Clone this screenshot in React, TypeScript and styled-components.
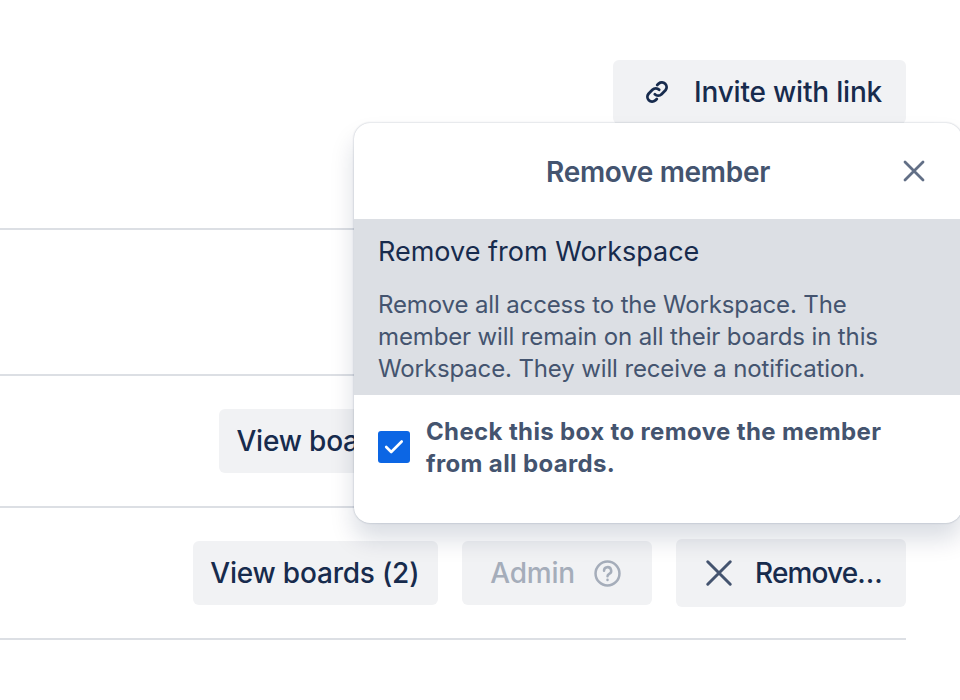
import React from "react";
import styled, { createGlobalStyle } from "styled-components";

const Global = createGlobalStyle`
  html, body { margin: 0; padding: 0; background: #fff; overflow: hidden; }
  body { font-family: Inter, "Liberation Sans", sans-serif; color: #172B4D; }
`;

const Page = styled.div`
  position: relative;
  width: 960px;
  height: 700px;
  overflow: hidden;
`;

const List = styled.div`
  width: 906px;
  display: flex;
  flex-direction: column;
`;

const Row = styled.div<{ $h: number; $top: number; $end?: number }>`
  height: ${p => p.$h}px;
  box-sizing: border-box;
  padding-top: ${p => p.$top}px;
  padding-right: ${p => p.$end ?? 0}px;
  border-bottom: 2px solid #DCDFE4;
  display: flex;
  justify-content: flex-end;
  align-items: flex-start;
  gap: 24px;
`;

const Button = styled.button<{ $disabled?: boolean; $tall?: boolean; $pad?: string }>`
  height: ${p => (p.$tall ? 68 : 64)}px;
  margin-top: ${p => (p.$tall ? -2 : 0)}px;
  padding: ${p => p.$pad ?? "0 20px"};
  border: 0;
  border-radius: 6px;
  background: #F1F2F4;
  color: ${p => (p.$disabled ? "#A5ADBA" : "#172B4D")};
  font: 500 28px/42px Inter, "Liberation Sans", sans-serif;
  letter-spacing: -0.2px;
  display: flex;
  align-items: center;
  white-space: nowrap;
`;

const TightLabel = styled.span`
  letter-spacing: -0.85px;
`;

const IconSlot = styled.span<{ $gap: number; $color?: string }>`
  display: inline-flex;
  margin-right: ${p => p.$gap}px;
  color: ${p => p.$color ?? "inherit"};
`;

const TrailingIcon = styled.span`
  display: inline-flex;
  margin-left: 19px;
`;

const Popover = styled.div`
  position: absolute;
  left: 354px;
  top: 123px;
  width: 608px;
  height: 400px;
  background: #fff;
  border-radius: 16px;
  box-shadow: 0 16px 24px rgba(9, 30, 66, 0.15), 0 0 2px rgba(9, 30, 66, 0.31);
  display: flex;
  flex-direction: column;
`;

const Header = styled.div`
  height: 96px;
  padding-top: 1px;
  box-sizing: border-box;
  flex: none;
  position: relative;
  display: flex;
  align-items: center;
  justify-content: center;
  color: #44546F;
  font-size: 28px;
  font-weight: 600;
  letter-spacing: -0.3px;
`;

const Close = styled.span`
  position: absolute;
  top: 36px;
  right: 36px;
  display: flex;
  color: #626F86;
`;

const Option = styled.div`
  flex: none;
  height: 176px;
  box-sizing: border-box;
  padding: 13px 24px 0;
  margin-right: 2px;
  background: #DCDFE4;
`;

const OptionTitle = styled.div`
  font-size: 27px;
  line-height: 40px;
  color: #172B4D;
`;

const OptionText = styled.div`
  margin-top: 17px;
  font-size: 24px;
  line-height: 32px;
  letter-spacing: -0.13px;
  color: #44546F;
  width: 530px;
`;

const CheckRow = styled.div`
  display: flex;
  padding: 21px 24px 0;
  gap: 16px;
`;

const Box = styled.span`
  flex: none;
  width: 32px;
  height: 32px;
  margin-top: 15px;
  border-radius: 3px;
  background: #0C66E4;
  display: flex;
  align-items: center;
  justify-content: center;
`;

const CheckLabel = styled.div`
  font-size: 24px;
  line-height: 32px;
  font-weight: 700;
  letter-spacing: 0.36px;
  color: #44546F;
  width: 500px;
`;

const XIcon = ({ size, width }: { size: number; width: number }) => (
  <svg width={size} height={size} viewBox="0 0 24 24" fill="none" stroke="currentColor" strokeWidth={width} strokeLinecap="round">
    <path d="M3 3l18 18M21 3L3 21" />
  </svg>
);

const LinkIcon = () => (
  <svg width="26" height="26" viewBox="0 0 24 24" fill="none" stroke="currentColor" strokeWidth="2.6" strokeLinecap="round" strokeLinejoin="round">
    <path d="M10 14a4.4 4.4 0 0 0 6.2 0l3.6-3.6a4.4 4.4 0 0 0-6.2-6.2l-1.4 1.4" />
    <path d="M14 10a4.4 4.4 0 0 0-6.2 0l-3.6 3.6a4.4 4.4 0 0 0 6.2 6.2l1.4-1.4" />
  </svg>
);

const HelpIcon = () => (
  <svg width="27" height="27" viewBox="0 0 28 28" fill="none" stroke="currentColor" strokeWidth="2.6" strokeLinecap="round">
    <circle cx="14" cy="14" r="12.4" />
    <path d="M10.4 11.2a3.7 3.7 0 1 1 5.4 3.2c-1.2.7-1.8 1.3-1.8 2.4" />
    <path d="M14 20.6v.1" />
  </svg>
);

export default function App() {
  return (
    <Page>
      <Global />
      <List>
        <Row $h={230} $top={60}>
          <Button $pad="0 24px 0 31px">
            <IconSlot $gap={24}><LinkIcon /></IconSlot>
            Invite with link
          </Button>
        </Row>
        <Row $h={146} $top={0} />
        <Row $h={132} $top={33} $end={447}>
          <Button $pad="0 19px 0 17px">View boards (1)</Button>
        </Row>
        <Row $h={132} $top={33}>
          <Button $pad="0 19px 0 17px">View boards (2)</Button>
          <Button $disabled $pad="0 31px 0 28px">
            Admin
            <TrailingIcon><HelpIcon /></TrailingIcon>
          </Button>
          <Button $tall $pad="0 24px 0 28px">
            <IconSlot $gap={21} $color="#44546F"><XIcon size={30} width={2.4} /></IconSlot>
            <TightLabel>Remove…</TightLabel>
          </Button>
        </Row>
      </List>
      <Popover>
        <Header>
          Remove member
          <Close><XIcon size={24} width={2.8} /></Close>
        </Header>
        <Option>
          <OptionTitle>Remove from Workspace</OptionTitle>
          <OptionText>
            Remove all access to the Workspace. The member will remain on all their boards in this Workspace. They will receive a notification.
          </OptionText>
        </Option>
        <CheckRow>
          <Box>
            <svg width="20" height="20" viewBox="0 0 20 20" fill="none" stroke="#fff" strokeWidth="2.6" strokeLinecap="round" strokeLinejoin="round">
              <path d="M2.2 10l5 5L17.7 4.5" />
            </svg>
          </Box>
          <CheckLabel>Check this box to remove the member from all boards.</CheckLabel>
        </CheckRow>
      </Popover>
    </Page>
  );
}
